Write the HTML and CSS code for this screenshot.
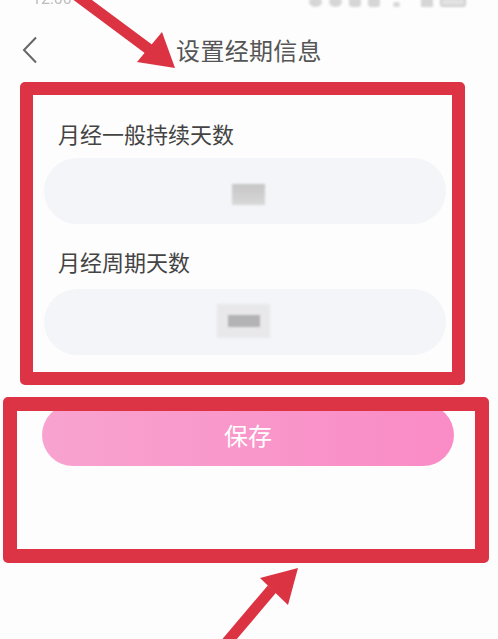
FILE: index.html
```html
<!DOCTYPE html>
<html lang="zh">
<head>
<meta charset="utf-8">
<link rel="stylesheet" href="styles.css">
</head>
<body>
<div class="page">
  <div class="status">
    <span class="time">12:00</span>
    <span class="sicons">
      <span class="si round"></span>
      <span class="si round"></span>
      <span class="si sq"></span>
      <span class="si sq"></span>
      <span class="si dot"></span>
      <span class="si bars"></span>
      <span class="si batt"></span>
    </span>
  </div>
  <header class="header">
    <svg class="back" width="18" height="28" viewBox="0 0 18 28"><path d="M15 1.5 L3 14 L15 26.5" fill="none" stroke="#666" stroke-width="2"/></svg>
    <h1 class="title">设置经期信息</h1>
    <span></span>
  </header>
  <main class="form">
    <div class="label">月经一般持续天数</div>
    <div class="input"><span class="mosaic m1"></span></div>
    <div class="label label2">月经周期天数</div>
    <div class="input input2"><span class="mosaic m2"><span class="bar"></span></span></div>
    <button class="save">保存</button>
  </main>
  <div class="mark box1"></div>
  <div class="mark box2"></div>
  <svg class="arrows" width="498" height="639" viewBox="0 0 498 639">
    <g fill="#dc3342" stroke="none">
      <line x1="72" y1="-8" x2="150" y2="50" stroke="#dc3342" stroke-width="11"/>
      <polygon points="137,62 162,32 175,68"/>
      <line x1="222" y1="648" x2="272" y2="589" stroke="#dc3342" stroke-width="11"/>
      <polygon points="260,578 298,568 288,605"/>
    </g>
  </svg>
</div>
</body>
</html>
```
FILE: styles.css
```css
* { box-sizing: border-box; }
html, body { margin: 0; padding: 0; }
body {
  background: #fdfdfd;
  font-family: "Noto Sans CJK SC", "Noto Sans", sans-serif;
  width: 498px;
  height: 639px;
  overflow: hidden;
}
.page { position: relative; width: 498px; height: 639px; }
.status {
  height: 10px;
  display: flex;
  justify-content: space-between;
  align-items: flex-end;
  padding: 0 32px 0 32px;
  overflow: hidden;
}
.time {
  font-family: "Roboto", sans-serif;
  font-size: 16px;
  line-height: 16px;
  color: #bdbdbd;
  margin-bottom: 3px;
  filter: blur(0.6px);
}
.sicons {
  display: flex;
  gap: 7px;
  align-items: flex-end;
  margin-bottom: 3px;
  filter: blur(0.8px);
}
.si { display: block; background: #d6d6d6; height: 10px; }
.si.round { width: 13px; border-radius: 50%; }
.si.sq { width: 12px; border-radius: 3px; }
.si.dot { width: 7px; height: 5px; border-radius: 50%; margin: 0 6px; }
.si.bars { width: 12px; margin-left: 8px; }
.si.batt { width: 26px; border-radius: 3px; background: #e2e2e2; border: 2px solid #cfcfcf; }

.header {
  height: 80px;
  display: grid;
  grid-template-columns: 1fr auto 1fr;
  align-items: center;
  padding: 0 21px;
}
.back { display: block; }
.title {
  margin: 0;
  font-size: 24px;
  font-weight: 400;
  color: #555;
  line-height: 32px;
  letter-spacing: 0.3px;
}
.form {
  padding: 28px 52px 0 44px;
  display: flex;
  flex-direction: column;
}
.label {
  font-size: 22px;
  line-height: 30px;
  color: #444;
  padding-left: 14px;
}
.label2 { margin-top: 22px; }
.input {
  margin-top: 10px;
  height: 66px;
  border-radius: 33px;
  background: #f4f5f8;
  display: flex;
  align-items: center;
  justify-content: center;
}
.input2 { margin-top: 13px; }
.mosaic { display: block; filter: blur(1px); }
.m1 {
  width: 33px;
  height: 21px;
  background: linear-gradient(#c6c6c6, #d8d8d8);
  margin-left: 6px;
  margin-top: 6px;
}
.m2 {
  width: 53px;
  height: 34px;
  background: #e8e8eb;
  display: flex;
  align-items: center;
  justify-content: center;
  margin-left: -4px;
  margin-top: -3px;
}
.m2 .bar { display: block; width: 32px; height: 12px; background: #b3b3b5; margin-left: 1px; }
.save {
  margin: 49px -8px 0 -2px;
  height: 62px;
  border: none;
  border-radius: 31px;
  background: linear-gradient(90deg, #f8a3cf, #fa8bc6);
  color: #fff;
  font-family: "Noto Sans CJK SC", sans-serif;
  font-size: 24px;
  line-height: 62px;
  padding: 0;
}
.mark {
  position: absolute;
  border: 13px solid #dc3444;
  border-radius: 5px;
}
.box1 { left: 20px; top: 82px; width: 445px; height: 303px; }
.box2 { left: 3px; top: 397px; width: 486px; height: 166px; border-width: 14px; }
.arrows { position: absolute; left: 0; top: 0; }
```
